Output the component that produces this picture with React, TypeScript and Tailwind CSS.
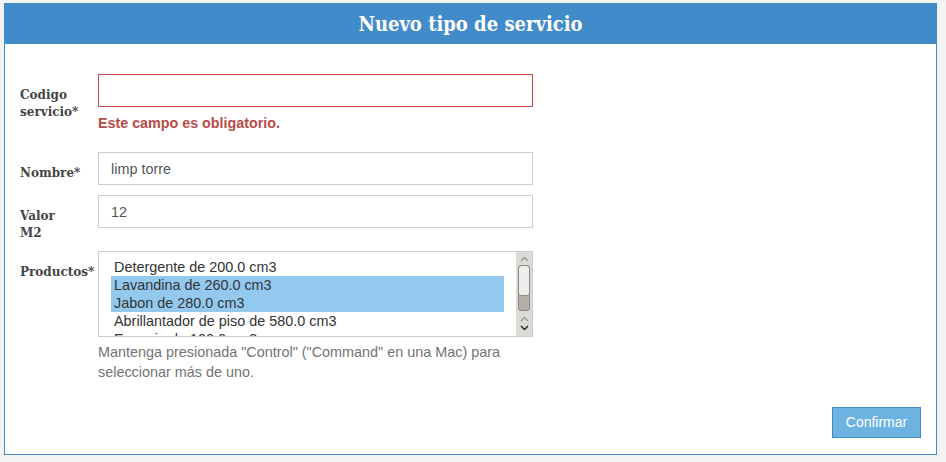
const productos = [
  { nombre: "Detergente de 200.0 cm3", selected: false },
  { nombre: "Lavandina de 260.0 cm3", selected: true },
  { nombre: "Jabon de 280.0 cm3", selected: true },
  { nombre: "Abrillantador de piso de 580.0 cm3", selected: false },
  { nombre: "Esponja de 100.0 cm3", selected: false },
];

// label box is narrow so that two-word labels wrap; long single words spill into the gap
const labelClass =
  "w-[78px] shrink-0 pt-[13px] pr-[23px] font-['DejaVu_Serif',serif] text-[12px] leading-[17px] font-bold text-[#444]";
const inputBase = "h-[33px] w-[435px] border bg-white px-[12px] text-[14.4px] text-[#555] outline-none";

function Chevron({ up, dark }: { up?: boolean; dark?: boolean }) {
  return (
    <svg width="9" height="6" viewBox="0 0 9 6" className="mx-auto">
      <path
        d={up ? "M1 5 L4.5 1.5 L8 5" : "M1 1 L4.5 4.5 L8 1"}
        fill="none"
        stroke={dark ? "#222" : "#9a9792"}
        strokeWidth="1.4"
      />
    </svg>
  );
}

function FakeScrollbar() {
  return (
    <div className="flex w-[16px] shrink-0 flex-col bg-[#dcdad5] pt-[4px]">
      <Chevron up />
      <div className="mx-auto mt-[3px] flex h-[46px] w-[12px] flex-col overflow-hidden rounded-[3px] border border-[#8b8882] bg-[#b4b0a9]">
        <div className="h-[30px] rounded-[3px] border-b border-[#8b8882] bg-[#efeeec]" />
      </div>
      <div className="mt-[5px]">
        <Chevron up />
      </div>
      <div className="mt-[3px]">
        <Chevron dark />
      </div>
    </div>
  );
}

export default function App() {
  return (
    <div className="min-h-screen bg-[#f3f3f3] pt-[3px] pr-[9px] pb-[7px] pl-[4px] font-['Liberation_Sans',Arial,sans-serif]">
      <div className="flex h-[452px] flex-col border border-[#428bca] bg-white">
        <div className="-mx-px -mt-px flex h-[41px] items-center justify-center bg-[#428bca]">
          <h1 className="font-['DejaVu_Serif_Condensed','DejaVu_Serif',serif] text-[20px] font-bold text-white">
            Nuevo tipo de servicio
          </h1>
        </div>

        <form className="flex flex-1 flex-col px-[15px] pt-[30px]" onSubmit={(e) => e.preventDefault()}>
          {/* Codigo */}
          <div className="flex">
            <label className={labelClass}>Codigo servicio*</label>
            <div>
              <input className={inputBase + " border-[#c9484a]"} defaultValue="" />
              <p className="mt-[8px] text-[14.3px] leading-[17px] font-bold text-[#b94a48]">Este campo es obligatorio.</p>
            </div>
          </div>

          {/* Nombre */}
          <div className="mt-[20px] flex">
            <label className={labelClass}>Nombre*</label>
            <input className={inputBase + " border-[#cccccc]"} defaultValue="limp torre" />
          </div>

          {/* Valor */}
          <div className="mt-[10px] flex">
            <label className={labelClass}>Valor M2</label>
            <input className={inputBase + " border-[#cccccc]"} defaultValue="12" />
          </div>

          {/* Productos */}
          <div className="mt-[9px] flex">
            <label className={labelClass}>Productos*</label>
            <div>
              <div className="flex h-[86px] w-[435px] border border-[#cccccc] bg-white">
                <div className="flex-1 overflow-hidden px-[12px] pt-[6px]">
                  {productos.map((p) => (
                    <div
                      key={p.nombre}
                      className={
                        "h-[18px] truncate pl-[3px] text-[14.4px] leading-[18px] text-[#333] " +
                        (p.selected ? "bg-[#94c9ef]" : "")
                      }
                    >
                      {p.nombre}
                    </div>
                  ))}
                </div>
                <FakeScrollbar />
              </div>
              <p className="mt-[5px] w-[435px] text-[14.4px] leading-[20px] text-[#737373]">
                Mantenga presionada "Control" ("Command" en una Mac) para seleccionar más de uno.
              </p>
            </div>
          </div>

          <div className="mt-[25px] flex justify-end">
            <button
              type="submit"
              className="h-[31px] w-[89px] border border-[#3f88c8] bg-[#6db3e2] text-[14px] text-white"
            >
              Confirmar
            </button>
          </div>
        </form>
      </div>
    </div>
  );
}
